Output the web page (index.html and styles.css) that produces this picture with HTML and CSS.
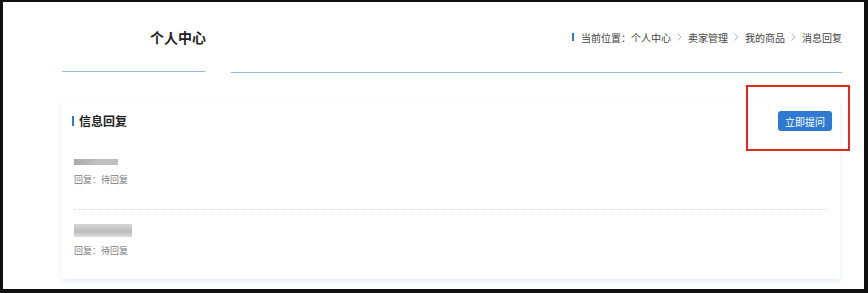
FILE: index.html
```html
<!DOCTYPE html>
<html lang="zh-CN">
<head>
  <meta charset="UTF-8" />
  <title>消息回复 - 个人中心</title>
  <link rel="stylesheet" href="styles.css">
</head>
<body>
  <div class="frame">
    <header class="page-head">
      <div class="side-title">
        <h1>个人中心</h1>
      </div>
      <nav class="crumbs">
        <span class="crumb-bar"></span>
        <span>当前位置：个人中心</span>
        <svg class="sep" width="5" height="8" viewBox="0 0 5 8"><polyline points="0.5,0.5 4,4 0.5,7.5" fill="none" stroke="#b5b5b5" stroke-width="1"/></svg>
        <span>卖家管理</span>
        <svg class="sep" width="5" height="8" viewBox="0 0 5 8"><polyline points="0.5,0.5 4,4 0.5,7.5" fill="none" stroke="#b5b5b5" stroke-width="1"/></svg>
        <span>我的商品</span>
        <svg class="sep" width="5" height="8" viewBox="0 0 5 8"><polyline points="0.5,0.5 4,4 0.5,7.5" fill="none" stroke="#b5b5b5" stroke-width="1"/></svg>
        <span>消息回复</span>
      </nav>
    </header>

    <section class="card">
      <div class="card-head">
        <h2>信息回复</h2>
        <button type="button" class="ask-btn">立即提问</button>
      </div>

      <ul class="msg-list">
        <li class="msg">
          <div class="blur-name short"></div>
          <p class="reply">回复：待回复</p>
        </li>
        <li class="msg">
          <div class="blur-name long"></div>
          <p class="reply">回复：待回复</p>
        </li>
      </ul>
    </section>

    <div class="mark-box"></div>
  </div>
</body>
</html>
```

FILE: styles.css
```css
body {
  margin: 0;
  font-family: "Noto Sans CJK SC", "Noto Sans", sans-serif;
  background-color: #ffffff;
}

.frame {
  position: relative;
  width: 868px;
  height: 293px;
  box-sizing: border-box;
  border-style: solid;
  border-color: #111;
  border-width: 2px 4px 4px 3px;
  overflow: hidden;
}

.page-head {
  display: flex;
  padding: 0 22px 0 59px;
}

.side-title {
  width: 143px;
  height: 70px;
  display: flex;
  align-items: center;
  padding-left: 88px;
  box-sizing: border-box;
  border-bottom: 1px solid #93b9e6;
}

.side-title h1 {
  margin: 0;
  font-size: 14px;
  font-weight: bold;
  color: #222;
  white-space: nowrap;
}

.crumbs {
  flex: 1;
  margin-left: 26px;
  height: 70px;
  display: flex;
  align-items: center;
  justify-content: flex-end;
  border-bottom: 1px solid #93b9e6;
  font-size: 10px;
  color: #444;
}

.crumb-bar {
  width: 2px;
  height: 8px;
  background-color: #2e7ad1;
  margin-right: 7px;
}

.crumbs .sep {
  margin: 0 6px;
}

.card {
  margin: 27px 0 0 58px;
  width: 779px;
  background-color: #fff;
  box-shadow: 0 2px 5px rgba(70, 120, 210, 0.15);
  padding-bottom: 21px;
}

.card-head {
  display: flex;
  justify-content: space-between;
  align-items: center;
  padding: 11px 8px 0 11px;
}

.card-head h2 {
  margin: 0;
  font-size: 12px;
  font-weight: bold;
  color: #222;
  border-left: 2px solid #2e7ad1;
  line-height: 10px;
  padding-left: 5px;
}

.ask-btn {
  background-color: #2e7ad1;
  color: #fff;
  border: none;
  border-radius: 3px;
  height: 20px;
  width: 54px;
  padding: 0;
  font-family: inherit;
  font-size: 10px;
  cursor: pointer;
}

.msg-list {
  list-style: none;
  margin: 0;
  padding: 0 12px 0 13px;
}

.msg {
  padding-top: 28px;
  padding-bottom: 22px;
  border-bottom: 1px dotted #d8dde4;
}

.msg + .msg {
  padding-top: 14px;
  padding-bottom: 0;
  border-bottom: none;
}

.blur-name {
  background: linear-gradient(90deg, #a9a9a9, #c2c2c2 60%, #bdbdbd);
  filter: blur(0.6px);
}

.blur-name.short {
  width: 44px;
  height: 6px;
}

.blur-name.long {
  width: 58px;
  height: 13px;
  background: linear-gradient(180deg, #d6d6d6, #bcbcbc 60%, #dedede);
}

.reply {
  margin: 8px 0 0;
  font-size: 9px;
  line-height: 14px;
  color: #808080;
}

.msg + .msg .reply {
  margin-top: 7px;
}

.mark-box {
  position: absolute;
  left: 743px;
  top: 83px;
  width: 104px;
  height: 66px;
  box-sizing: border-box;
  border: 2px solid #e5261e;
}
```
